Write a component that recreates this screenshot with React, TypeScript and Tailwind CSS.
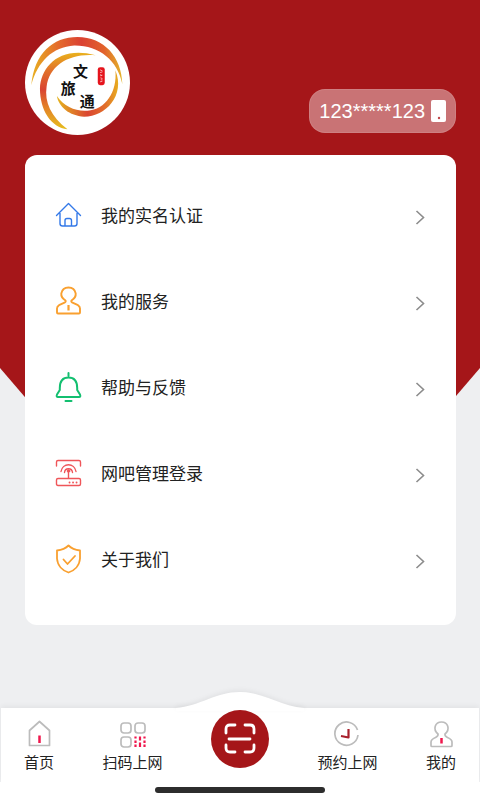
import type { ReactNode } from "react";

function Logo() {
  return (
    <svg viewBox="27 29 316 316" className="size-[105px] shrink-0" role="img" aria-label="文旅通">
      <defs>
        <linearGradient id="arcTop" x1="0" x2="1" y1="0" y2="0">
          <stop offset="0" stopColor="#e8b021" />
          <stop offset="0.3" stopColor="#e46a2c" />
          <stop offset="0.55" stopColor="#da4132" />
          <stop offset="0.8" stopColor="#e2622c" />
          <stop offset="1" stopColor="#e3b52a" />
        </linearGradient>
        <linearGradient id="arcLeft" x1="0" x2="0" y1="0" y2="1">
          <stop offset="0" stopColor="#e9b11d" />
          <stop offset="0.22" stopColor="#e2742a" />
          <stop offset="0.48" stopColor="#d94432" />
          <stop offset="0.72" stopColor="#e38328" />
          <stop offset="1" stopColor="#e6bd1e" />
        </linearGradient>
        <linearGradient id="arcLow" x1="0" x2="1" y1="0" y2="0">
          <stop offset="0" stopColor="#e5b51f" />
          <stop offset="0.5" stopColor="#da4631" />
          <stop offset="0.8" stopColor="#e2702a" />
          <stop offset="1" stopColor="#e8ae20" />
        </linearGradient>
      </defs>
      <circle cx="185" cy="187" r="158" fill="#fff" />
      <path d="M46 195C55 100 110 50 185 50C265 50 318 110 320 192C305 120 250 75 175 76C110 80 65 125 46 195Z" fill="url(#arcTop)" />
      <path d="M240 105C130 75 75 140 72 205C72 270 105 322 155 328C105 290 85 245 92 200C100 135 160 98 240 105Z" fill="url(#arcLeft)" />
      <path d="M299 150C330 225 270 290 205 290C160 288 128 260 123 228C145 260 180 275 215 272C270 268 305 215 299 150Z" fill="url(#arcLow)" />
      <g className="font-['Noto_Sans_CJK_SC',sans-serif] font-bold" fill="#111" textAnchor="middle" fontSize="45">
        <text x="194" y="170">文</text>
        <text x="157" y="222">旅</text>
        <text x="214" y="261">通</text>
      </g>
      <rect x="246" y="141" width="21" height="54" rx="7" fill="#e5141c" />
      <path d="M253 149l7 3m-7 5l7-2m-5 7v5l5-2m-6 8l6 2m-5 4h5m-7 6l7-2" stroke="#fff" strokeWidth="2" fill="none" />
    </svg>
  );
}

type IconProps = { children: ReactNode; className: string };

function Icon({ children, className }: IconProps) {
  return (
    <svg viewBox="0 0 28 32" aria-hidden="true" fill="none" stroke="currentColor" strokeLinecap="round" strokeLinejoin="round" className={`h-8 w-7 shrink-0 ${className}`}>
      {children}
    </svg>
  );
}

const rows = [
  {
    label: "我的实名认证",
    icon: (
      <Icon className="text-[#3479e8]">
        <path strokeWidth="1.4" d="M1.500 16.500L13.500 4.500L25.500 16.500M5 14.500V24.500Q5 27 7.500 27H19.500Q22 27 22 24.500V14.500M10 26.500V21.500Q10 19.500 12 19.500H14.500Q16.500 19.500 16.500 21.500V26.500" />
      </Icon>
    ),
  },
  {
    label: "我的服务",
    icon: (
      <Icon className="text-[#f9a030]">
        <path strokeWidth="1.900" d="M10.500 15.500C7.500 13.500 6 11 6.300 8.500C7 4.800 10 2.500 13.500 2.500S20 4.800 20.700 8.500C21 11 19.500 13.500 16.500 15.500C16 16.300 16.300 17 17.500 17.700L23 20.200Q25 21.500 25 23.500V27.500Q25 28.500 24 28.500H3Q2 28.500 2 27.500V23.500Q2 21.500 4 20.200L9.500 17.700C10.700 17 11 16.300 10.500 15.500Z" />
        <path strokeWidth="2.200" strokeLinecap="butt" d="M13.500 20V25.500" />
      </Icon>
    ),
  },
  {
    label: "帮助与反馈",
    icon: (
      <Icon className="text-[#13bf70]">
        <path strokeWidth="2" d="M13.500 2V5M4.800 17C4.800 10 8 6.500 13.500 6.500S22.200 10 22.200 17V19L25 23.500Q26 26 24 26H3Q1 26 2 23.500L4.800 19ZM10.500 30H16.500" />
      </Icon>
    ),
  },
  {
    label: "网吧管理登录",
    icon: (
      <Icon className="text-[#ef5559]">
        <path strokeWidth="1.400" d="M1.500 9V5Q1.500 3.500 3 3.500H24Q25.500 3.500 25.500 5V9M3 21.500H24Q25.500 21.500 25.500 23V27Q25.500 28.500 24 28.500H3Q1.500 28.500 1.500 27V23Q1.500 21.500 3 21.500ZM13.500 14V21M6 14.500C7.500 5.500 19.500 5.500 21 14.500M9.500 15.500C10 10.500 17 10.500 17.500 15.500" />
        <circle cx="13.500" cy="14" r="1.300" fill="currentColor" />
        <path strokeWidth="1.800" d="M14.500 25.500h.1M18 25.500h.1M21.500 25.500h.1" />
      </Icon>
    ),
  },
  {
    label: "关于我们",
    icon: (
      <Icon className="text-[#f9a030]">
        <path strokeWidth="1.800" d="M13.500 2.500C10.500 5.500 6.500 7 2 7.500V15.500C2.500 22.500 7.500 27.500 13.500 29.500C19.500 27.500 24.500 22.500 25 15.500V7.500C20.500 7 16.500 5.500 13.500 2.500ZM8.500 16.500L12.500 21L20 13" />
      </Icon>
    ),
  },
];

type NavItemProps = { label: string; children: ReactNode };

function NavItem({ label, children }: NavItemProps) {
  return (
    <a href="#" className="flex flex-col items-center gap-1 pt-3 text-[15px] leading-5">
      <svg viewBox="0 0 28 28" aria-hidden="true" fill="none" stroke="#bcbcbc" strokeWidth="1.700" strokeLinejoin="round" className="size-7">
        {children}
      </svg>
      {label}
    </a>
  );
}

export default function App() {
  return (
    <div className="relative isolate flex min-h-screen flex-col bg-[#eeeff1] font-['Noto_Sans_CJK_SC',sans-serif] text-[#222]">
      <div className="absolute inset-x-0 top-0 -z-10 h-[424px] bg-[#a51619] [clip-path:polygon(0_0,100%_0,100%_368px,90%_424px,10%_424px,0_368px)]" />

      <header className="flex items-end justify-between pt-[30px] pr-6 pl-[25px]">
        <Logo />
        <div className="mb-0.5 flex h-11 items-center gap-1.5 rounded-2xl border border-white/10 bg-white/40 px-[9px] font-['Liberation_Sans',sans-serif] text-xl text-white">
          <span>123*****123</span>
          <svg viewBox="0 0 15 22" aria-hidden="true" className="h-[22px] w-[15px]">
            <rect width="15" height="22" rx="2" fill="#fff" />
            <circle cx="8" cy="18" r="1.200" fill="#c0494c" />
          </svg>
        </div>
      </header>

      <main className="mt-5 mr-6 mb-16 ml-[25px] rounded-xl bg-white pt-[17px] pb-[23px]">
        <ul>
          {rows.map((row) => (
            <li key={row.label}>
              <a href="#" className="flex h-[86px] items-center gap-[18px] px-[30px] text-[17px]">
                {row.icon}
                <span className="flex-1">{row.label}</span>
                <svg viewBox="0 0 12 20" aria-hidden="true" fill="none" stroke="#8c8c8c" strokeWidth="1.600" className="mt-1 h-5 w-3">
                  <path d="M2.500 4L9.500 10.500L2.500 17" />
                </svg>
              </a>
            </li>
          ))}
        </ul>
      </main>

      <footer className="mt-auto">
        <nav className="relative mx-px flex h-[74px] items-start justify-between bg-white px-[23px] shadow-[0_-2px_5px_rgba(0,0,0,0.05)]">
          <svg viewBox="0 0 128 20" aria-hidden="true" className="absolute -top-[17px] left-1/2 h-5 w-32 -translate-x-1/2 overflow-visible">
            <path d="M0 17C24 15 40 1 64 1S104 15 128 17V20H0Z" fill="#fff" className="drop-shadow-[0_-2px_2px_rgba(0,0,0,0.05)]" />
          </svg>
          <NavItem label="首页">
            <path d="M4.500 10.500L14.500 1.500L24.500 10.500V25.500H4.500Z" />
            <path d="M14.500 15.500V23" stroke="#ef174d" strokeWidth="2.500" />
          </NavItem>
          <NavItem label="扫码上网">
            <rect x="2" y="3" width="10" height="10" rx="3" />
            <rect x="16" y="3" width="10" height="10" rx="3" />
            <rect x="2" y="17" width="10" height="10" rx="3" />
            <path d="M16.500 16.500v2m0 2v2.500m0 1.500v2.500M21 16.500v4m0 2v4.500M25.500 16.500v2m0 2v2.500m0 1.500v2.500" stroke="#ef174d" strokeWidth="2.200" />
          </NavItem>
          <button type="button" aria-label="扫一扫" className="relative mt-0.5 flex size-[58px] items-center justify-center rounded-full bg-[#a51619]">
            <svg viewBox="0 0 34 34" aria-hidden="true" fill="none" stroke="#fff" strokeWidth="2.800" strokeLinecap="round" className="size-[34px]">
              <path d="M3 11V7Q3 3 7 3H12M22 3H27Q31 3 31 7V11M31 23V26Q31 30 27 30H22M12 30H7Q3 30 3 26V23M6 17H27" />
            </svg>
          </button>
          <NavItem label="预约上网">
            <path d="M24.500 10A11.600 11.600 0 1 0 25 15" />
            <path d="M15.500 9V17.500L8 16" stroke="#a8202c" strokeWidth="2.200" />
          </NavItem>
          <NavItem label="我的">
            <path d="M11 14C5.500 9.500 8 2 14.500 2S23.500 9.500 18 14C17.500 16 18.500 16.500 20.500 17.500C24 19 25 20 25 22V25.500Q25 26.500 24 26.500H5Q4 26.500 4 25.500V22C4 20 5 19 8.500 17.500C10.500 16.500 11.500 16 11 14Z" />
            <path d="M14.500 18V23.500" stroke="#ef174d" strokeWidth="2.500" />
          </NavItem>
        </nav>
        <div className="relative flex h-[18px] justify-center bg-white pt-[5px]">
          <div className="h-1.5 w-[170px] rounded-full bg-[#2d2d2d]" />
        </div>
      </footer>
    </div>
  );
}
